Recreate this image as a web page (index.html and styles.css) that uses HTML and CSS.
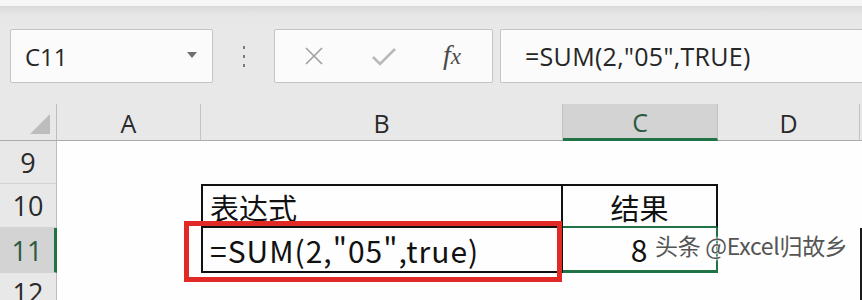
FILE: index.html
```html
<!DOCTYPE html>
<html lang="zh-CN">
<head>
    <meta charset="UTF-8">
    <title>SUM 表达式</title>
    <link rel="stylesheet" href="styles.css">
</head>
<body>
    <div class="top-strip"></div>
    <div class="toolbar">
        <div class="name-box">
            <span class="name-text">C11</span>
            <span class="name-arrow"></span>
        </div>
        <div class="grip"><i></i><i></i><i></i></div>
        <div class="btn-box">
            <svg class="ico ico-x" width="22" height="22" viewBox="0 0 22 22">
                <path d="M3 3 L19 19 M19 3 L3 19" stroke="#a0a0a0" stroke-width="1.6" fill="none"/>
            </svg>
            <svg class="ico ico-ok" width="26" height="22" viewBox="0 0 26 22">
                <path d="M2 11 L9 18 L24 3" stroke="#b9b9b9" stroke-width="2.6" fill="none"/>
            </svg>
            <span class="fx">f<small>x</small></span>
        </div>
        <div class="formula">=SUM(2,"05",TRUE)</div>
    </div>

    <div class="sheet">
        <!-- 列标 -->
        <div class="corner"><span class="tri"></span></div>
        <div class="col-h">A</div>
        <div class="col-h">B</div>
        <div class="col-h sel">C</div>
        <div class="col-h">D</div>
        <div class="col-h last"></div>

        <!-- 第 9 行 -->
        <div class="row-h">9</div>
        <div class="cell"></div>
        <div class="cell"></div>
        <div class="cell"></div>
        <div class="cell"></div>
        <div class="cell"></div>

        <!-- 第 10 行 -->
        <div class="row-h">10</div>
        <div class="cell"></div>
        <div class="cell tb tb-b10">表达式</div>
        <div class="cell tb tb-c10 center">结果</div>
        <div class="cell"></div>
        <div class="cell"></div>

        <!-- 第 11 行 -->
        <div class="row-h sel">11</div>
        <div class="cell"></div>
        <div class="cell tb tb-b11">
            <span class="latin">=SUM(2,"05",true)</span>
            <div class="red-box"></div>
        </div>
        <div class="cell tb tb-c11 center"><span class="latin">8</span></div>
        <div class="cell"></div>
        <div class="cell edge"></div>

        <!-- 第 12 行 -->
        <div class="row-h">12</div>
        <div class="cell"></div>
        <div class="cell"></div>
        <div class="cell"></div>
        <div class="cell"></div>
        <div class="cell edge"></div>

        <div class="watermark">头条 @Excel归故乡</div>
    </div>
</body>
</html>
```

FILE: styles.css
```css
body {
    margin: 0;
    width: 862px;
    height: 300px;
    overflow: hidden;
    background: #e8e8e8;
    font-family: "Open Sans", "Noto Sans CJK SC", sans-serif;
    color: #222;
}
.top-strip {
    height: 6px;
    background: #f6f6f6;
}
.toolbar {
    height: 98px;
    box-sizing: border-box;
    padding: 23px 0 0 10px;
    display: flex;
    align-items: flex-start;
    background: linear-gradient(#d9d9d9 0, #e6e6e6 8px, #e8e8e8 20px);
}
.name-box {
    width: 203px;
    height: 54px;
    box-sizing: border-box;
    background: #fbfbfb;
    border: 1px solid #c4c4c4;
    border-radius: 2px;
    display: flex;
    align-items: center;
    justify-content: space-between;
    padding: 0 15px 0 14px;
}
.name-text {
    font-size: 24px;
    color: #262626;
}
.name-arrow {
    width: 0;
    height: 0;
    border-left: 5px solid transparent;
    border-right: 5px solid transparent;
    border-top: 6px solid #6e6e6e;
    margin-top: -3px;
}
.grip {
    width: 61px;
    height: 54px;
    display: flex;
    flex-direction: column;
    align-items: center;
    justify-content: center;
    gap: 6px;
}
.grip i {
    width: 2px;
    height: 3px;
    background: #7a7a7a;
}
.btn-box {
    width: 219px;
    height: 54px;
    box-sizing: border-box;
    background: #fbfbfb;
    border: 1px solid #c4c4c4;
    border-radius: 2px;
    display: flex;
    align-items: center;
    padding: 0 0 0 28px;
}
.ico-x { margin-right: 46px; }
.ico-ok { margin-right: 46px; margin-top: 2px; }
.fx {
    font-family: "Liberation Serif", "DejaVu Serif", serif;
    font-style: italic;
    font-size: 28px;
    color: #4a4a4a;
    margin-top: -2px;
}
.fx small {
    font-size: 23px;
}
.formula {
    margin-left: 7px;
    flex: 1;
    height: 54px;
    box-sizing: border-box;
    background: #fbfbfb;
    border: 1px solid #c4c4c4;
    border-right: none;
    border-radius: 2px 0 0 2px;
    padding: 0 0 0 24px;
    display: flex;
    align-items: center;
    font-size: 25px;
    letter-spacing: 0.3px;
    color: #262626;
}

/* 表格区域 */
.sheet {
    position: relative;
    display: grid;
    grid-template-columns: 57px 144px 362px 155px 142px 2px;
    grid-template-rows: 37px 43px 44px 45px 40px;
    background: #fefefe;
}
.corner {
    background: #e8e8e8;
    border-right: 1px solid #bdbdbd;
    border-bottom: 1px solid #ababab;
    position: relative;
}
.corner .tri {
    position: absolute;
    right: 6px;
    bottom: 6px;
    width: 0;
    height: 0;
    border-left: 20px solid transparent;
    border-bottom: 20px solid #bdbdbd;
}
.col-h {
    background: #e8e8e8;
    border-right: 1px solid #c3c3c3;
    border-bottom: 1px solid #ababab;
    display: flex;
    align-items: center;
    justify-content: center;
    font-size: 25px;
    color: #2a2a2a;
    padding-top: 2px;
}
.col-h.sel {
    background: #d3d3d3;
    border-bottom: 3px solid #217346;
    color: #2c5a41;
}
.col-h.last {
    border-right: none;
}
.row-h {
    background: #e8e8e8;
    border-right: 1px solid #bdbdbd;
    border-bottom: 1px solid #d2d2d2;
    display: flex;
    align-items: center;
    justify-content: center;
    font-size: 27px;
    color: #2a2a2a;
}
.row-h.sel {
    background: #d3d3d3;
    border-right: 3px solid #217346;
    color: #2c5a41;
}
.cell {
    background: #fefefe;
}
.tb {
    box-sizing: border-box;
    display: flex;
    align-items: center;
    font-family: "Noto Sans CJK SC", "Noto Sans", sans-serif;
    font-size: 29px;
    color: #111;
    padding-left: 7px;
    position: relative;
}
.tb .latin {
    font-size: 30px;
    letter-spacing: 1px;
}
.center {
    justify-content: center;
    padding-left: 0;
}
.tb-b10 {
    border: 2px solid #111;
    padding-top: 2px;
}
.tb-c10 {
    border-top: 2px solid #111;
    border-right: 2px solid #111;
    border-bottom: 2px solid #217346;
    padding-top: 2px;
}
.tb-b11 {
    border-left: 2px solid #111;
    border-right: 2px solid #111;
    border-bottom: 2px solid #111;
}
.tb-c11 {
    border-right: 2px solid #217346;
    border-bottom: 3px solid #217346;
}
.cell.edge {
    background: #1a1a1a;
}
.red-box {
    position: absolute;
    left: -19px;
    top: -7px;
    width: 378px;
    height: 61px;
    box-sizing: border-box;
    border: 5px solid #e12a26;
}
.watermark {
    position: absolute;
    left: 655px;
    top: 124px;
    font-family: "Noto Sans CJK SC", sans-serif;
    font-size: 23px;
    color: #555;
    letter-spacing: -0.3px;
    text-shadow: 0 0 2px #fff, 0 0 2px #fff, 0 0 3px #fff;
}
```
